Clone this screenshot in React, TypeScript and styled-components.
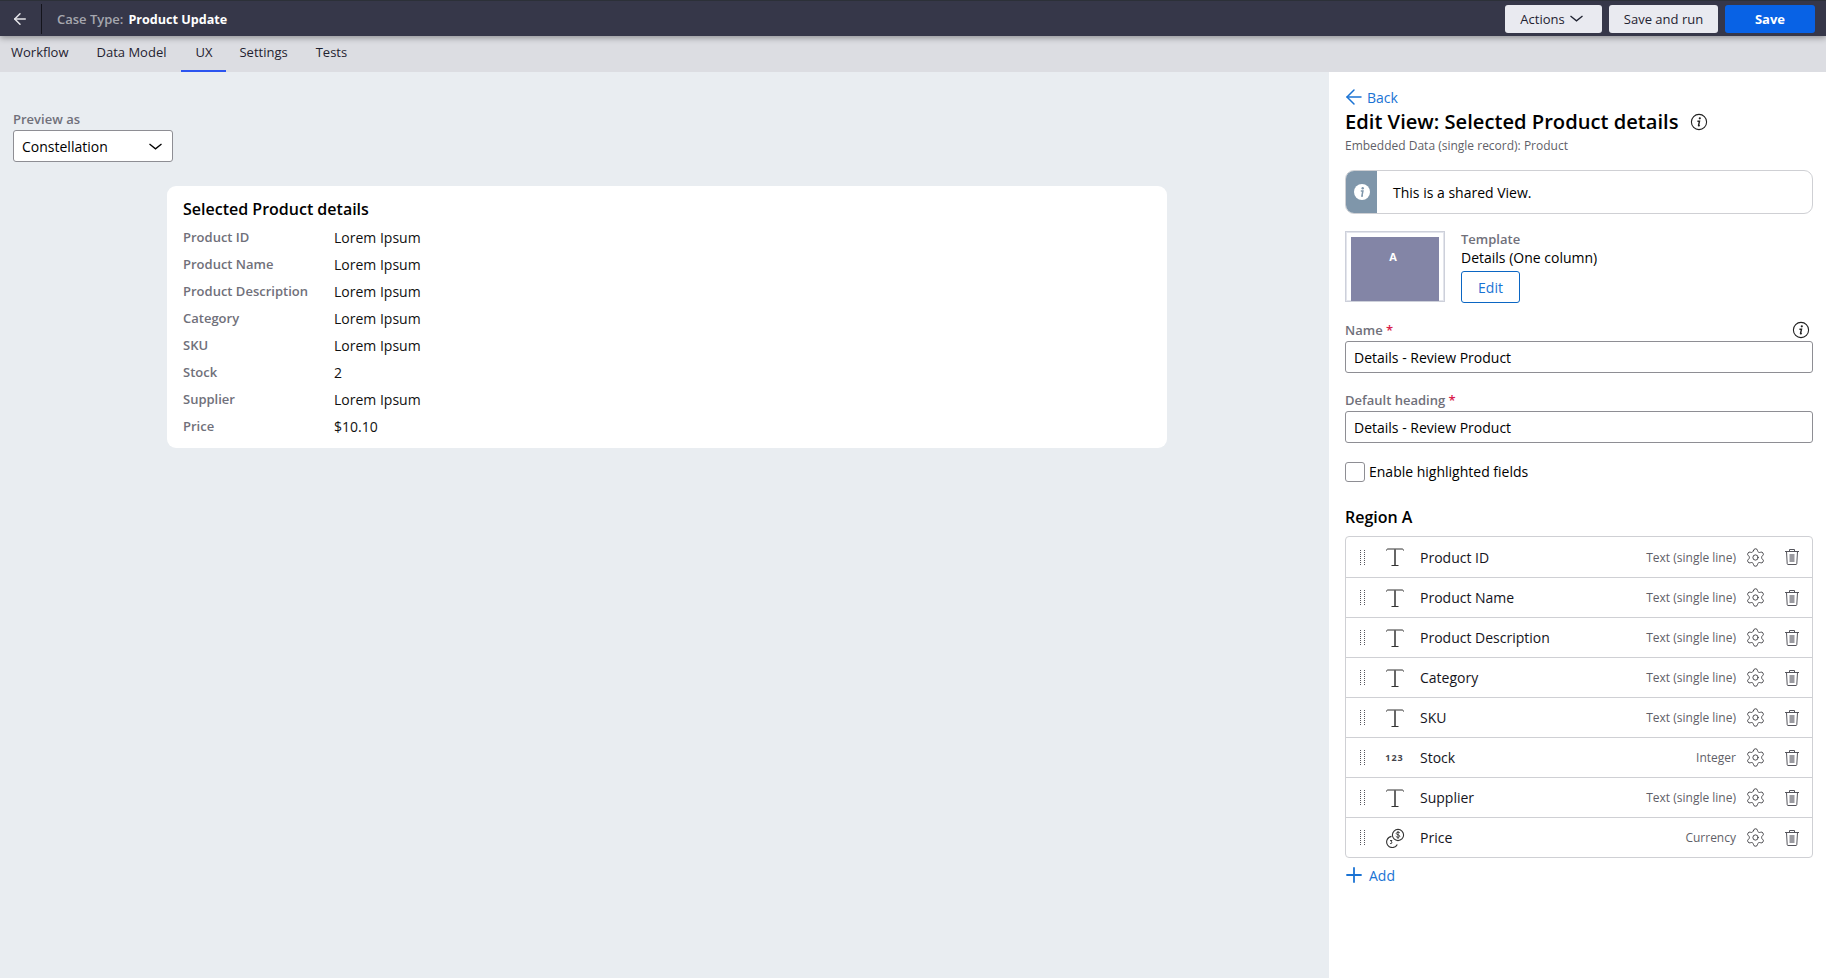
import styled, { createGlobalStyle } from 'styled-components'
import { ArrowLeft, Plus, Settings as Gear } from 'lucide-react'

const GlobalStyle = createGlobalStyle`
  html, body { margin: 0; padding: 0; }
  body {
    font-family: "Open Sans", "Noto Sans", sans-serif;
    font-size: 14px;
    color: #000;
    background: #e9edf1;
  }
`

const Page = styled.div`
  width: 1826px;
  height: 978px;
  display: flex;
  flex-direction: column;
  overflow: hidden;
`

const TopBar = styled.header`
  height: 36px;
  flex: none;
  display: flex;
  align-items: center;
  background: #363749;
  border-top: 1px solid #2c3038;
  box-sizing: border-box;
  box-shadow: 0 2px 6px rgba(0, 0, 0, 0.35);
  position: relative;
  z-index: 1;
`

const BackBox = styled.div`
  width: 42px;
  height: 30px;
  flex: none;
  box-sizing: border-box;
  padding-right: 2px;
  display: flex;
  align-items: center;
  justify-content: center;
  color: #e6e6ea;
  border-right: 1px solid #14141c;
`

const CaseType = styled.div`
  margin-left: 15px;
  display: flex;
  align-items: baseline;
  gap: 5px;
  flex: 1;
`

const CaseLabel = styled.span`
  font-size: 13px;
  font-weight: 600;
  color: #a6a7af;
`

const CaseName = styled.span`
  font-size: 12.6px;
  font-weight: 700;
  color: #fff;
`

const BarActions = styled.div`
  display: flex;
  gap: 7px;
  margin-right: 11px;
`

const BarButton = styled.button<{ $primary?: boolean; $w: number }>`
  width: ${({ $w }) => $w}px;
  height: 28px;
  padding: 0;
  border: 0;
  border-radius: 3px;
  display: flex;
  align-items: center;
  justify-content: center;
  gap: 5px;
  font-family: inherit;
  font-size: 13px;
  font-weight: ${({ $primary }) => ($primary ? 700 : 400)};
  background: ${({ $primary }) => ($primary ? '#0862e5' : '#e9eaf0')};
  color: ${({ $primary }) => ($primary ? '#fff' : '#1f2230')};
  &:first-child {
    padding-right: 4px;
  }
`

const Tabs = styled.nav`
  height: 36px;
  flex: none;
  display: flex;
  background: #dcdde2;
`

const Tab = styled.div<{ $active?: boolean; $first?: boolean }>`
  padding: 0 14px 2px ${({ $first }) => ($first ? '11px' : '14px')};
  height: 36px;
  box-sizing: border-box;
  display: flex;
  align-items: center;
  font-size: 13px;
  color: #1f2230;
  border-bottom: 2px solid ${({ $active }) => ($active ? '#2c55f0' : 'transparent')};
  &:nth-child(2) {
    padding-right: 15px;
  }
  &:nth-child(4) {
    padding-left: 13px;
  }
`

const Body = styled.div`
  flex: 1;
  display: flex;
  min-height: 0;
`

const Canvas = styled.main`
  flex: 1;
  min-width: 0;
  padding: 38px 0 0 13px;
`

const MutedLabel = styled.div`
  font-size: 13px;
  font-weight: 600;
  line-height: 18px;
  color: #70707a;
`

const Select = styled.div`
  width: 160px;
  height: 32px;
  margin-top: 2px;
  box-sizing: border-box;
  padding: 0 10px 0 8px;
  display: flex;
  align-items: center;
  justify-content: space-between;
  font-size: 14px;
  background: #fff;
  border: 1px solid #8e8e94;
  border-radius: 3px;
`

const Card = styled.section`
  width: 1000px;
  height: 262px;
  margin: 24px 0 0 154px;
  box-sizing: border-box;
  padding: 12px 16px;
  background: #fff;
  border-radius: 9px;
`

const CardTitle = styled.h2`
  margin: 0 0 4px;
  font-size: 16px;
  line-height: 22px;
  font-weight: 600;
`

const DetailRow = styled.div`
  height: 27px;
  display: grid;
  grid-template-columns: 151px 1fr;
  align-items: center;
`

const DetailLabel = styled.span`
  font-size: 13px;
  font-weight: 600;
  color: #70707a;
  position: relative;
  top: -1px;
`

const DetailValue = styled.span`
  font-size: 14px;
  color: #111;
`

const Panel = styled.aside`
  width: 497px;
  flex: none;
  box-sizing: border-box;
  padding: 15px 13px 0 16px;
  background: #fff;
`

const BackLink = styled.div`
  display: flex;
  align-items: center;
  gap: 1px;
  height: 20px;
  margin-left: -3px;
  font-size: 14px;
  color: #1a73d4;
`

const PanelTitle = styled.h1`
  margin: 1px 0 0;
  display: flex;
  align-items: center;
  gap: 11px;
  font-size: 20.15px;
  line-height: 27px;
  font-weight: 600;
`

const SubTitle = styled.div`
  margin-top: 3px;
  font-size: 12px;
  line-height: 16px;
  color: #5f5f68;
`

const Notice = styled.div`
  height: 44px;
  margin-top: 16px;
  box-sizing: border-box;
  display: flex;
  align-items: center;
  border: 1px solid #cfd0d4;
  border-radius: 9px;
  overflow: hidden;
  font-size: 14px;
`

const NoticeIcon = styled.div`
  width: 31px;
  align-self: stretch;
  margin-right: 16px;
  display: flex;
  align-items: center;
  justify-content: center;
  background: #7f96aa;
`

const TemplateRow = styled.div`
  margin-top: 17px;
  display: flex;
  gap: 16px;
`

const Thumb = styled.div`
  width: 100px;
  height: 71px;
  box-sizing: border-box;
  padding: 5px 5px 0;
  border: 1px solid #cdd0da;
  box-shadow: inset 0 0 0 1px #e3e5ec;
`

const ThumbFill = styled.div`
  height: 100%;
  padding: 12px 4px 0 0;
  box-sizing: border-box;
  text-align: center;
  font-size: 11px;
  line-height: 15px;
  font-weight: 700;
  color: #fff;
  background: #8385a6;
`

const TemplateInfo = styled.div`
  margin-top: -1px;
  display: flex;
  flex-direction: column;
  align-items: flex-start;
`

const TemplateValue = styled.div`
  font-size: 14px;
  line-height: 19px;
`

const OutlineButton = styled.button`
  width: 59px;
  height: 32px;
  margin-top: 4px;
  padding: 0;
  font-family: inherit;
  font-size: 14px;
  color: #1a73d4;
  background: #fff;
  border: 1px solid #0b66c3;
  border-radius: 3px;
`

const Field = styled.div<{ $mt: number }>`
  margin-top: ${({ $mt }) => $mt}px;
`

const LabelRow = styled.div`
  display: flex;
  align-items: center;
  justify-content: space-between;
  height: 18px;
  padding-right: 3px;
`

const Required = styled.span`
  color: #d91c4a;
`

const TextInput = styled.div`
  height: 32px;
  margin-top: 2px;
  box-sizing: border-box;
  padding: 0 8px;
  display: flex;
  align-items: center;
  font-size: 14px;
  border: 1px solid #8e8e94;
  border-radius: 3px;
`

const CheckRow = styled.label`
  margin-top: 19px;
  display: flex;
  align-items: center;
  gap: 4px;
  font-size: 14px;
  line-height: 20px;
`

const CheckBox = styled.span`
  width: 20px;
  height: 20px;
  box-sizing: border-box;
  border: 1px solid #8e8e94;
  border-radius: 3px;
`

const RegionTitle = styled.h3`
  margin: 24px 0 0;
  font-size: 16px;
  line-height: 22px;
  font-weight: 600;
`

const FieldList = styled.div`
  margin-top: 8px;
  border: 1px solid #cfd0d4;
  border-radius: 4px;
`

const FieldRow = styled.div`
  height: 40px;
  box-sizing: border-box;
  display: flex;
  align-items: center;
  padding-right: 12px;
  border-top: 1px solid #cfd0d4;
  &:first-child {
    border-top: 0;
  }
`

const GripCell = styled.div`
  width: 33px;
  padding-left: 13px;
  box-sizing: border-box;
  display: flex;
`

const TypeCell = styled.div`
  width: 31px;
  display: flex;
  justify-content: center;
  margin-right: 10px;
  color: #55555c;
`

const FieldName = styled.div`
  flex: 1;
  font-size: 14px;
  color: #14141c;
`

const FieldType = styled.div`
  font-size: 12px;
  color: #5f5f68;
`

const RowIcon = styled.div<{ $ml: number }>`
  margin-left: ${({ $ml }) => $ml}px;
  display: flex;
  color: #333338;
`

const NumberGlyph = styled.span`
  font-size: 9px;
  font-weight: 700;
  letter-spacing: 1px;
  color: #45454c;
`

const AddLink = styled.div`
  margin: 7px 0 0 -3px;
  display: flex;
  align-items: center;
  gap: 3px;
  height: 20px;
  font-size: 14px;
  color: #1a73d4;
`

const InfoIcon = () => (
  <svg width="18" height="18" viewBox="0 0 18 18" fill="none">
    <circle cx="9" cy="9" r="7.6" stroke="#222" strokeWidth="1.1" />
    <circle cx="9.8" cy="5.3" r="1.1" fill="#222" />
    <path d="M7.4 8.200h2.100l-1 4.300c-.1.400.5.300 1.300-.2" stroke="#222" strokeWidth="1.4" />
  </svg>
)

const NoticeGlyph = () => (
  <svg width="18" height="18" viewBox="0 0 18 18">
    <circle cx="9" cy="9" r="8" fill="#fff" />
    <circle cx="9.7" cy="5.2" r="1.2" fill="#7f96aa" />
    <path d="M7.8 8h2.1l-1 5h1.1" stroke="#7f96aa" strokeWidth="1.5" fill="none" />
  </svg>
)

const FlatChevron = () => (
  <svg width="13" height="7" viewBox="0 0 13 7" fill="none">
    <path d="M.5 1l6 4.800 6-4.800" stroke="currentColor" strokeWidth="1.3" />
  </svg>
)

const Grip = () => (
  <svg width="7" height="15" viewBox="0 0 7 15" fill="#55555c">
    {[0, 2, 4, 6, 8, 10, 12, 14].map(y => (
      <g key={y}>
        <rect x="1" y={y} width="1" height="1" />
        <rect x="5" y={y} width="1" height="1" />
      </g>
    ))}
  </svg>
)

const TextGlyph = () => (
  <svg width="18" height="20" viewBox="0 0 18 20" fill="none">
    <path d="M.5 3.500C.5 2.500 1 2 2 2h14c1 0 1.500.5 1.500 1.500" stroke="#333" strokeWidth="1" />
    <path d="M9 2v16" stroke="#666" strokeWidth="2" />
    <path d="M5.500 18.500h7" stroke="#333" strokeWidth="1" />
  </svg>
)

const CoinsGlyph = () => (
  <svg width="20" height="20" viewBox="0 0 20 20" fill="none" stroke="#333" strokeWidth="1.1">
    <circle cx="13" cy="7" r="5.6" />
    <path d="M15 5c-.5-1-3.600-1.200-3.800.4-.2 1.600 3.700 1 3.600 2.900-.1 1.400-3.200 1.400-4-.2M13 3v8" strokeWidth="0.9" />
    <path d="M6.500 8.400a5.600 5.600 0 1 0 5.800 8" />
    <path d="M5 12.500h2l-1 1.500c1.500 0 1.500 2-1 1.500" strokeWidth="0.9" />
  </svg>
)

const TrashGlyph = () => (
  <svg width="16" height="18" viewBox="0 0 16 18" fill="none" stroke="#55555c" strokeWidth="1">
    <path d="M1 3.500h14M5.500 3V1.500h5V3" />
    <path d="M2.500 3.500l.7 12.200c0 .5.4.8.8.8h8c.4 0 .8-.3.8-.8l.7-12.200" />
    <rect x="5.500" y="6" width="5" height="8" fill="#9a9aa0" stroke="none" />
  </svg>
)

const details = [
  { label: 'Product ID', value: 'Lorem Ipsum' },
  { label: 'Product Name', value: 'Lorem Ipsum' },
  { label: 'Product Description', value: 'Lorem Ipsum' },
  { label: 'Category', value: 'Lorem Ipsum' },
  { label: 'SKU', value: 'Lorem Ipsum' },
  { label: 'Stock', value: '2' },
  { label: 'Supplier', value: 'Lorem Ipsum' },
  { label: 'Price', value: '$10.10' },
]

const TEXT = 'Text (single line)'

const fields = [
  { name: 'Product ID', type: TEXT },
  { name: 'Product Name', type: TEXT },
  { name: 'Product Description', type: TEXT },
  { name: 'Category', type: TEXT },
  { name: 'SKU', type: TEXT },
  { name: 'Stock', type: 'Integer' },
  { name: 'Supplier', type: TEXT },
  { name: 'Price', type: 'Currency' },
]

const typeIcon = (type: string) => {
  if (type === 'Integer') return <NumberGlyph>123</NumberGlyph>
  if (type === 'Currency') return <CoinsGlyph />
  return <TextGlyph />
}

export default function App() {
  return (
    <Page>
      <GlobalStyle />
      <TopBar>
        <BackBox>
          <ArrowLeft size={18} strokeWidth={2} />
        </BackBox>
        <CaseType>
          <CaseLabel>Case Type:</CaseLabel>
          <CaseName>Product Update</CaseName>
        </CaseType>
        <BarActions>
          <BarButton $w={97}>
            Actions <FlatChevron />
          </BarButton>
          <BarButton $w={109}>Save and run</BarButton>
          <BarButton $w={90} $primary>Save</BarButton>
        </BarActions>
      </TopBar>

      <Tabs>
        <Tab $first>Workflow</Tab>
        <Tab>Data Model</Tab>
        <Tab $active>UX</Tab>
        <Tab>Settings</Tab>
        <Tab>Tests</Tab>
      </Tabs>

      <Body>
        <Canvas>
          <MutedLabel>Preview as</MutedLabel>
          <Select>
            Constellation
            <FlatChevron />
          </Select>
          <Card>
            <CardTitle>Selected Product details</CardTitle>
            {details.map(d => (
              <DetailRow key={d.label}>
                <DetailLabel>{d.label}</DetailLabel>
                <DetailValue>{d.value}</DetailValue>
              </DetailRow>
            ))}
          </Card>
        </Canvas>

        <Panel>
          <BackLink>
            <ArrowLeft size={24} strokeWidth={1.5} />
            Back
          </BackLink>
          <PanelTitle>
            Edit View: Selected Product details
            <InfoIcon />
          </PanelTitle>
          <SubTitle>Embedded Data (single record): Product</SubTitle>

          <Notice>
            <NoticeIcon>
              <NoticeGlyph />
            </NoticeIcon>
            This is a shared View.
          </Notice>

          <TemplateRow>
            <Thumb>
              <ThumbFill>A</ThumbFill>
            </Thumb>
            <TemplateInfo>
              <MutedLabel>Template</MutedLabel>
              <TemplateValue>Details (One column)</TemplateValue>
              <OutlineButton>Edit</OutlineButton>
            </TemplateInfo>
          </TemplateRow>

          <Field $mt={18}>
            <LabelRow>
              <MutedLabel>
                Name <Required>*</Required>
              </MutedLabel>
              <InfoIcon />
            </LabelRow>
            <TextInput>Details - Review Product</TextInput>
          </Field>

          <Field $mt={18}>
            <LabelRow>
              <MutedLabel>
                Default heading <Required>*</Required>
              </MutedLabel>
            </LabelRow>
            <TextInput>Details - Review Product</TextInput>
          </Field>

          <CheckRow>
            <CheckBox />
            Enable highlighted fields
          </CheckRow>

          <RegionTitle>Region A</RegionTitle>

          <FieldList>
            {fields.map(f => (
              <FieldRow key={f.name}>
                <GripCell>
                  <Grip />
                </GripCell>
                <TypeCell>{typeIcon(f.type)}</TypeCell>
                <FieldName>{f.name}</FieldName>
                <FieldType>{f.type}</FieldType>
                <RowIcon $ml={9}>
                  <Gear size={21} strokeWidth={1} />
                </RowIcon>
                <RowIcon $ml={18}>
                  <TrashGlyph />
                </RowIcon>
              </FieldRow>
            ))}
          </FieldList>

          <AddLink>
            <Plus size={24} strokeWidth={1.8} />
            Add
          </AddLink>
        </Panel>
      </Body>
    </Page>
  )
}
